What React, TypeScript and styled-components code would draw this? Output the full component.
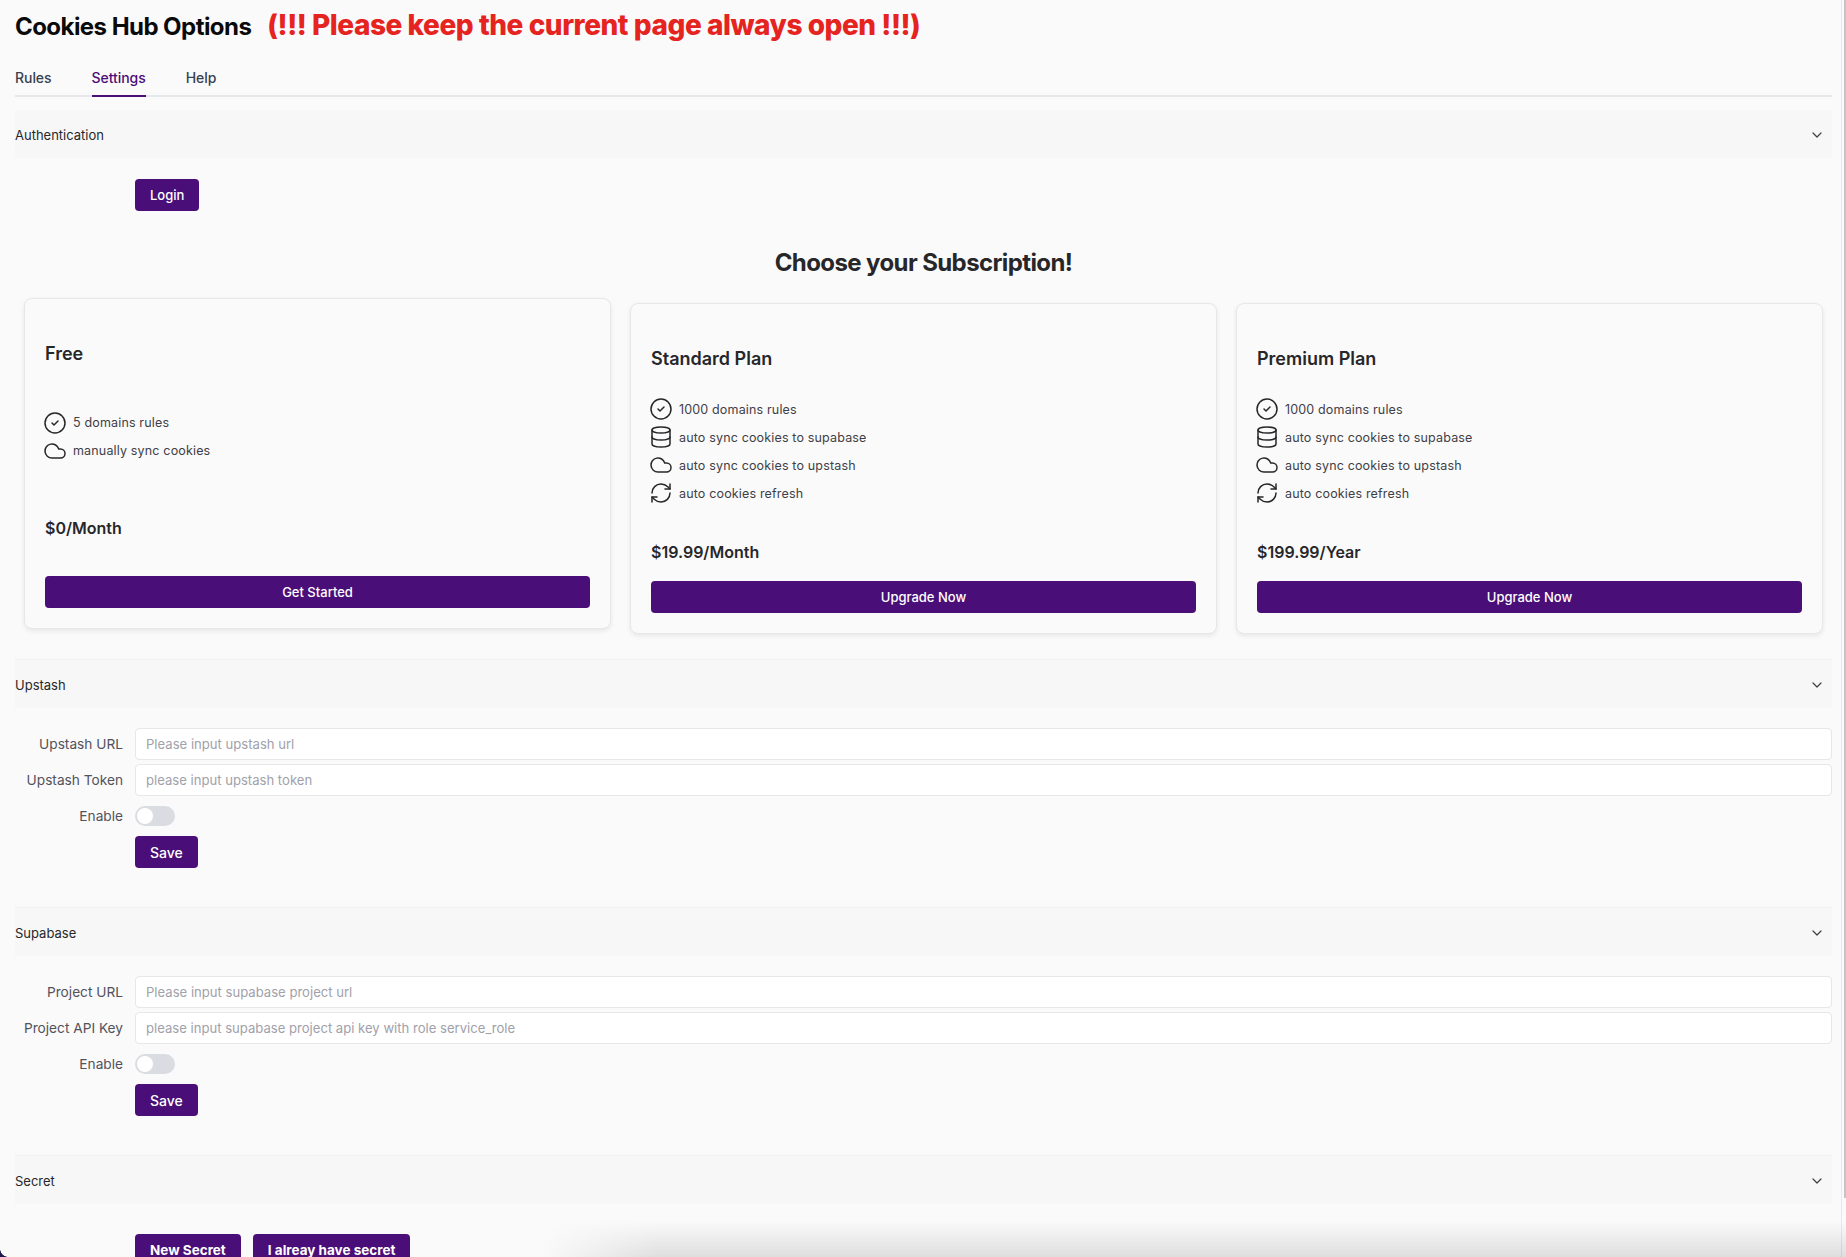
import React from "react";
import styled, { createGlobalStyle } from "styled-components";
import { ChevronDown, CircleCheck, Cloud, Database, RefreshCw } from "lucide-react";

const Global = createGlobalStyle`
  html, body { margin: 0; padding: 0; height: 100%; overflow: hidden; background: #fafafa; }
  #root { height: 100%; }
  * { box-sizing: border-box; }
  body { font-family: Inter, "Liberation Sans", sans-serif; color: #1f2937; }
`;

const Frame = styled.div`
  position: relative;
  display: flex;
  height: 1257px;
  overflow: hidden;
  background: #fafafa;
`;
const Main = styled.main`
  flex: 1;
  min-width: 0;
  padding: 0 9px 0 15px;
`;
const ScrollTrack = styled.div`
  flex: 0 0 5px;
  border-left: 1px solid #e8e8e8;
  padding: 0 0 59px 2px;
  display: flex;
`;
const ScrollThumb = styled.div`
  flex: 1;
  background: #c4c4c4;
`;
const BottomShade = styled.div`
  position: absolute;
  left: 540px;
  right: 0;
  bottom: 0;
  height: 36px;
  pointer-events: none;
  background: linear-gradient(to bottom, rgba(0,0,0,0), rgba(0,0,0,0.11));
  mask-image: linear-gradient(to right, transparent, #000 120px);
`;
const Corner = styled.div`
  position: absolute;
  left: 0;
  bottom: 0;
  width: 8px;
  height: 8px;
  background: radial-gradient(circle at 100% 0, transparent 7.5px, #1d1a4d 8px);
`;
const TitleRow = styled.header`
  display: flex;
  align-items: center;
  gap: 16px;
  height: 53px;
  margin-bottom: 1px;
`;
const Title = styled.h1`
  margin: 0;
  font-size: 24px;
  line-height: 32px;
  font-weight: 700;
  letter-spacing: -0.55px;
  color: #0a0a0a;
`;
const Warning = styled.span`
  font-size: 28px;
  line-height: 30px;
  margin-bottom: 3px;
  font-weight: 800;
  color: #e5231f;
  letter-spacing: -0.45px;
`;
const Tabs = styled.nav`
  display: flex;
  gap: 40px;
  height: 43px;
  border-bottom: 2px solid #e5e7eb;
`;
const Tab = styled.a<{ $active?: boolean }>`
  height: 43px;
  padding-top: 14px;
  font-size: 14px;
  line-height: 20px;
  letter-spacing: -0.05px;
  font-weight: 500;
  color: ${(p) => (p.$active ? "#4a0e78" : "#374151")};
  border-bottom: 2px solid ${(p) => (p.$active ? "#4a0e78" : "transparent")};
`;
const Section = styled.section`
  border-bottom: 1px solid #f1f2f4;
`;
const AccordionHead = styled.div<{ $first?: boolean }>`
  display: flex;
  align-items: center;
  justify-content: space-between;
  height: 48px;
  margin-top: ${(p) => (p.$first ? "13px" : "0")};
  padding: 2px 7px 0 0;
  background: #f7f7f7;
  font-size: 13px;
  color: #27272a;
  svg { color: #3f3f46; }
`;
const AccordionBody = styled.div<{ $pad?: string }>`
  padding: ${(p) => p.$pad || "20px 0 39px"};
`;
const Primary = styled.button<{ $strong?: boolean }>`
  height: 32px;
  padding: 0 15px;
  border: 0;
  border-radius: 4px;
  background: #4a0e78;
  color: #fff;
  font-family: inherit;
  font-size: ${(p) => (p.$strong ? "13.5px" : "13px")};
  font-weight: ${(p) => (p.$strong ? 700 : 500)};
  display: block;
`;
const SaveButton = styled(Primary)`
  font-size: 14px;
`;
const Indented = styled.div`
  padding-left: 120px;
  display: flex;
  gap: 12px;
`;
const Heading = styled.h2`
  margin: 36px 0 0;
  text-align: center;
  font-size: 24px;
  line-height: 32px;
  font-weight: 700;
  letter-spacing: -0.6px;
  color: #27272a;
`;
const Plans = styled.div`
  display: grid;
  grid-template-columns: repeat(3, 1fr);
  gap: 19px;
  padding: 24px 9px 0 9px;
`;
const Card = styled.article<{ $raised?: boolean }>`
  display: flex;
  flex-direction: column;
  justify-content: space-between;
  padding: 20px;
  border: 1px solid #e5e7eb;
  border-radius: 8px;
  background: #fafafa;
  box-shadow: 0 2px 5px rgba(0, 0, 0, 0.08);
  transform: ${(p) => (p.$raised ? "translateY(-5px)" : "none")};
`;
const PlanName = styled.h3`
  margin: 21px 0 22px;
  font-size: 18px;
  line-height: 28px;
  font-weight: 600;
  color: #27272a;
`;
const Features = styled.ul`
  list-style: none;
  margin: 0 0 33px;
  padding: 0;
`;
const Feature = styled.li`
  display: flex;
  align-items: center;
  gap: 8px;
  height: 28px;
  font-size: 12.5px;
  letter-spacing: 0.16px;
  color: #3f3f46;
  svg { flex: 0 0 20px; color: #27272a; overflow: visible; }
`;
const Price = styled.div`
  margin-bottom: 17px;
  font-size: 16px;
  line-height: 24px;
  font-weight: 600;
  color: #27272a;
`;
const WideButton = styled(Primary)`
  width: 100%;
`;
const Row = styled.div`
  display: flex;
  align-items: center;
  gap: 12px;
  margin-bottom: 4px;
`;
const Label = styled.label`
  width: 108px;
  font-size: 13.7px;
  color: #52525b;
  white-space: nowrap;
  display: flex;
  justify-content: flex-end;
`;
const Input = styled.input`
  flex: 1;
  height: 32px;
  padding: 0 10px;
  border: 1px solid #e5e7eb;
  border-radius: 4px;
  background: #fff;
  font-family: inherit;
  font-size: 13.1px;
  &::placeholder { color: #a1a1aa; opacity: 1; }
`;
const ToggleRow = styled(Row)`
  height: 20px;
  margin: 10px 0;
`;
const Toggle = styled.span`
  display: flex;
  align-items: center;
  width: 40px;
  height: 20px;
  padding: 2px;
  border-radius: 10px;
  background: #d9dce1;
`;
const Knob = styled.span`
  width: 16px;
  height: 16px;
  border-radius: 50%;
  background: #fff;
`;

type Plan = { name: string; price: string; cta: string; raised?: boolean; items: [React.ElementType, string][] };
const paid: [React.ElementType, string][] = [
  [CircleCheck, "1000 domains rules"],
  [Database, "auto sync cookies to supabase"],
  [Cloud, "auto sync cookies to upstash"],
  [RefreshCw, "auto cookies refresh"],
];
const plans: Plan[] = [
  { name: "Free", price: "$0/Month", cta: "Get Started", raised: true, items: [[CircleCheck, "5 domains rules"], [Cloud, "manually sync cookies"]] },
  { name: "Standard Plan", price: "$19.99/Month", cta: "Upgrade Now", items: paid },
  { name: "Premium Plan", price: "$199.99/Year", cta: "Upgrade Now", items: paid },
];

function ConnectionForm(props: { urlLabel: string; urlHint: string; keyLabel: string; keyHint: string }) {
  return (
    <AccordionBody>
      <Row><Label>{props.urlLabel}</Label><Input placeholder={props.urlHint} readOnly /></Row>
      <Row><Label>{props.keyLabel}</Label><Input placeholder={props.keyHint} readOnly /></Row>
      <ToggleRow><Label>Enable</Label><Toggle><Knob /></Toggle></ToggleRow>
      <Indented><SaveButton>Save</SaveButton></Indented>
    </AccordionBody>
  );
}

function Head(props: { first?: boolean; children: React.ReactNode }) {
  return (
    <AccordionHead $first={props.first}>
      {props.children}
      <ChevronDown size={16} strokeWidth={1.8} />
    </AccordionHead>
  );
}

export default function App() {
  return (
    <Frame>
      <Global />
      <Main>
        <TitleRow>
          <Title>Cookies Hub Options</Title>
          <Warning>(!!! Please keep the current page always open !!!)</Warning>
        </TitleRow>
        <Tabs>
          <Tab>Rules</Tab>
          <Tab $active>Settings</Tab>
          <Tab>Help</Tab>
        </Tabs>
        <Section>
          <Head first>Authentication</Head>
          <AccordionBody $pad="21px 0 25px">
            <Indented><Primary>Login</Primary></Indented>
            <Heading>Choose your Subscription!</Heading>
            <Plans>
              {plans.map((plan) => (
                <Card key={plan.name} $raised={plan.raised}>
                  <PlanName>{plan.name}</PlanName>
                  <Features>
                    {plan.items.map(([Icon, text]) => (
                      <Feature key={text}><Icon size={20} strokeWidth={1.5} viewBox="2 2 20 20" />{text}</Feature>
                    ))}
                  </Features>
                  <Price>{plan.price}</Price>
                  <WideButton>{plan.cta}</WideButton>
                </Card>
              ))}
            </Plans>
          </AccordionBody>
        </Section>
        <Section>
          <Head>Upstash</Head>
          <ConnectionForm urlLabel="Upstash URL" urlHint="Please input upstash url" keyLabel="Upstash Token" keyHint="please input upstash token" />
        </Section>
        <Section>
          <Head>Supabase</Head>
          <ConnectionForm urlLabel="Project URL" urlHint="Please input supabase project url" keyLabel="Project API Key" keyHint="please input supabase project api key with role service_role" />
        </Section>
        <Section>
          <Head>Secret</Head>
          <AccordionBody $pad="30px 0 20px">
            <Indented>
              <Primary $strong>New Secret</Primary>
              <Primary $strong>I alreay have secret</Primary>
            </Indented>
          </AccordionBody>
        </Section>
      </Main>
      <ScrollTrack><ScrollThumb /></ScrollTrack>
      <BottomShade />
      <Corner />
    </Frame>
  );
}
